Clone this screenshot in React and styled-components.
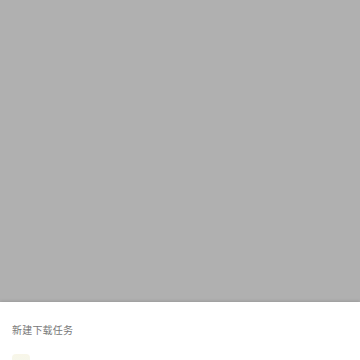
import React from "react";
import styled, { createGlobalStyle } from "styled-components";

const Global = createGlobalStyle`
  html, body { margin: 0; padding: 0; background: #ffffff; }
  body { font-family: "Noto Sans CJK SC", "Noto Sans", sans-serif; }
  #root { height: 360px; }
`;

const Page = styled.div`
  display: flex;
  flex-direction: column;
  width: 360px;
  height: 360px;
  overflow: hidden;
`;

const Overlay = styled.div`
  flex: 0 0 302px;
  background: #b0b0b0;
`;

const Sheet = styled.div`
  flex: 1;
  background: #ffffff;
  box-shadow: 0 -1px 3px rgba(0, 0, 0, 0.12);
  overflow: hidden;
  display: flex;
  flex-direction: column;
`;

const Title = styled.div`
  padding: 21px 12px 0;
  font-size: 10px;
  line-height: 14px;
  color: #777777;
  letter-spacing: 0.2px;
`;

const Row = styled.div`
  display: flex;
  align-items: flex-start;
  gap: 18px;
  padding: 17px 12px 0;
`;

const Icon = styled.div`
  width: 18px;
  height: 18px;
  flex: 0 0 18px;
  border-radius: 4px;
  background: linear-gradient(#f8f6e8, #f3f8f0);
`;

const Label = styled.div`
  font-size: 10px;
  line-height: 14px;
  color: #f6f6f6;
  padding-top: 4px;
`;

export default function App() {
  return (
    <>
      <Global />
      <Page>
        <Overlay />
        <Sheet>
          <Title>新建下载任务</Title>
          <Row>
            <Icon />
            <Label>链接下载任务</Label>
          </Row>
        </Sheet>
      </Page>
    </>
  );
}
